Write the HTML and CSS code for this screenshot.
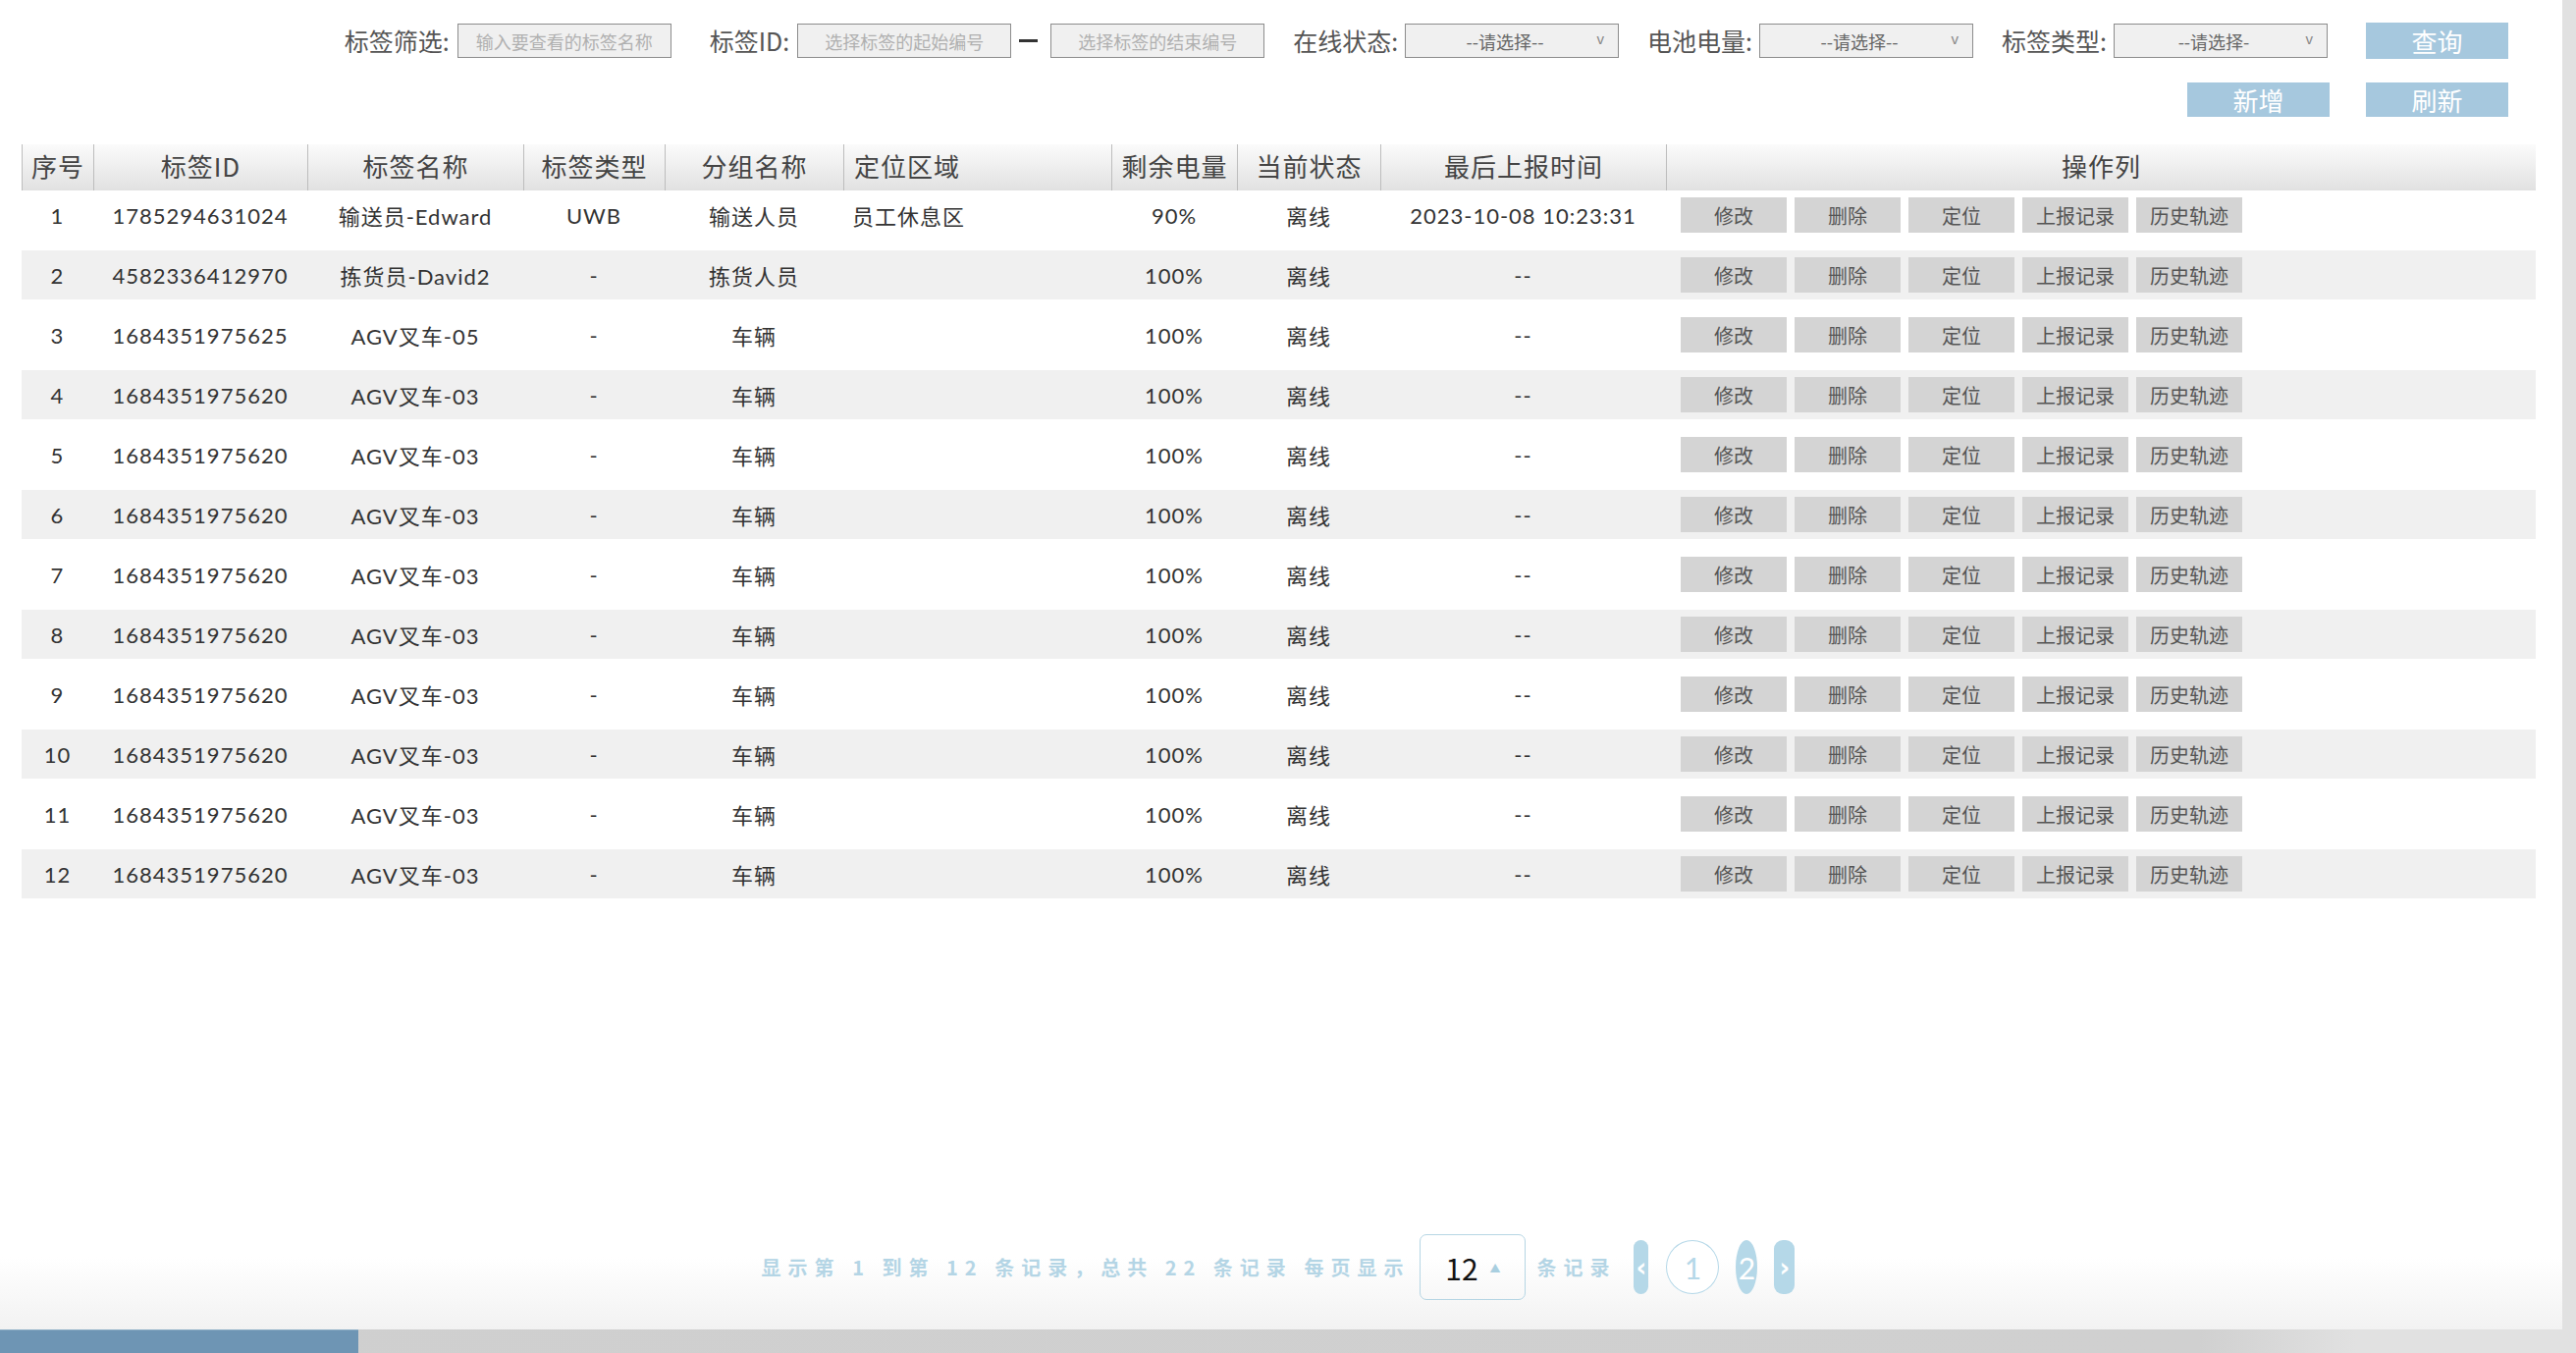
FILE: index.html
```html
<!DOCTYPE html>
<html lang="zh-CN">
<head>
<meta charset="utf-8">
<title>标签管理</title>
<link rel="stylesheet" href="styles.css">
</head>
<body>
<div class="app">
  <div class="page">
    <div class="toolbar">
      <div class="tb-row">
        <span class="lbl">标签筛选:</span>
        <div class="field">输入要查看的标签名称</div>
        <span class="lbl lbl-gap-l">标签ID:</span>
        <div class="field">选择标签的起始编号</div>
        <span class="dash"></span>
        <div class="field">选择标签的结束编号</div>
        <span class="lbl lbl-gap-s">在线状态:</span>
        <div class="field select"><span class="sel-text">--请选择--</span><span class="caret">v</span></div>
        <span class="lbl lbl-gap-s">电池电量:</span>
        <div class="field select"><span class="sel-text">--请选择--</span><span class="caret">v</span></div>
        <span class="lbl lbl-gap-s">标签类型:</span>
        <div class="field select"><span class="sel-text">--请选择-</span><span class="caret">v</span></div>
        <div class="btn btn-query">查询</div>
      </div>
      <div class="tb-row tb-row2">
        <div class="btn btn-small">新增</div>
        <div class="btn btn-small btn-refresh">刷新</div>
      </div>
    </div>

    <div class="table">
      <div class="thead">
        <div class="th">序号</div>
        <div class="th">标签ID</div>
        <div class="th">标签名称</div>
        <div class="th">标签类型</div>
        <div class="th">分组名称</div>
        <div class="th th-left">定位区域</div>
        <div class="th">剩余电量</div>
        <div class="th">当前状态</div>
        <div class="th">最后上报时间</div>
        <div class="th">操作列</div>
      </div>
      <div class="tbody">
        <div class="row"><div class="td">1</div><div class="td">1785294631024</div><div class="td">输送员-Edward</div><div class="td">UWB</div><div class="td">输送人员</div><div class="td td-left">员工休息区</div><div class="td">90%</div><div class="td">离线</div><div class="td">2023-10-08 10:23:31</div><div class="ops"><span class="op">修改</span><span class="op">删除</span><span class="op">定位</span><span class="op">上报记录</span><span class="op">历史轨迹</span></div></div>
        <div class="row"><div class="td">2</div><div class="td">4582336412970</div><div class="td">拣货员-David2</div><div class="td">-</div><div class="td">拣货人员</div><div class="td td-left"></div><div class="td">100%</div><div class="td">离线</div><div class="td">--</div><div class="ops"><span class="op">修改</span><span class="op">删除</span><span class="op">定位</span><span class="op">上报记录</span><span class="op">历史轨迹</span></div></div>
        <div class="row"><div class="td">3</div><div class="td">1684351975625</div><div class="td">AGV叉车-05</div><div class="td">-</div><div class="td">车辆</div><div class="td td-left"></div><div class="td">100%</div><div class="td">离线</div><div class="td">--</div><div class="ops"><span class="op">修改</span><span class="op">删除</span><span class="op">定位</span><span class="op">上报记录</span><span class="op">历史轨迹</span></div></div>
        <div class="row"><div class="td">4</div><div class="td">1684351975620</div><div class="td">AGV叉车-03</div><div class="td">-</div><div class="td">车辆</div><div class="td td-left"></div><div class="td">100%</div><div class="td">离线</div><div class="td">--</div><div class="ops"><span class="op">修改</span><span class="op">删除</span><span class="op">定位</span><span class="op">上报记录</span><span class="op">历史轨迹</span></div></div>
        <div class="row"><div class="td">5</div><div class="td">1684351975620</div><div class="td">AGV叉车-03</div><div class="td">-</div><div class="td">车辆</div><div class="td td-left"></div><div class="td">100%</div><div class="td">离线</div><div class="td">--</div><div class="ops"><span class="op">修改</span><span class="op">删除</span><span class="op">定位</span><span class="op">上报记录</span><span class="op">历史轨迹</span></div></div>
        <div class="row"><div class="td">6</div><div class="td">1684351975620</div><div class="td">AGV叉车-03</div><div class="td">-</div><div class="td">车辆</div><div class="td td-left"></div><div class="td">100%</div><div class="td">离线</div><div class="td">--</div><div class="ops"><span class="op">修改</span><span class="op">删除</span><span class="op">定位</span><span class="op">上报记录</span><span class="op">历史轨迹</span></div></div>
        <div class="row"><div class="td">7</div><div class="td">1684351975620</div><div class="td">AGV叉车-03</div><div class="td">-</div><div class="td">车辆</div><div class="td td-left"></div><div class="td">100%</div><div class="td">离线</div><div class="td">--</div><div class="ops"><span class="op">修改</span><span class="op">删除</span><span class="op">定位</span><span class="op">上报记录</span><span class="op">历史轨迹</span></div></div>
        <div class="row"><div class="td">8</div><div class="td">1684351975620</div><div class="td">AGV叉车-03</div><div class="td">-</div><div class="td">车辆</div><div class="td td-left"></div><div class="td">100%</div><div class="td">离线</div><div class="td">--</div><div class="ops"><span class="op">修改</span><span class="op">删除</span><span class="op">定位</span><span class="op">上报记录</span><span class="op">历史轨迹</span></div></div>
        <div class="row"><div class="td">9</div><div class="td">1684351975620</div><div class="td">AGV叉车-03</div><div class="td">-</div><div class="td">车辆</div><div class="td td-left"></div><div class="td">100%</div><div class="td">离线</div><div class="td">--</div><div class="ops"><span class="op">修改</span><span class="op">删除</span><span class="op">定位</span><span class="op">上报记录</span><span class="op">历史轨迹</span></div></div>
        <div class="row"><div class="td">10</div><div class="td">1684351975620</div><div class="td">AGV叉车-03</div><div class="td">-</div><div class="td">车辆</div><div class="td td-left"></div><div class="td">100%</div><div class="td">离线</div><div class="td">--</div><div class="ops"><span class="op">修改</span><span class="op">删除</span><span class="op">定位</span><span class="op">上报记录</span><span class="op">历史轨迹</span></div></div>
        <div class="row"><div class="td">11</div><div class="td">1684351975620</div><div class="td">AGV叉车-03</div><div class="td">-</div><div class="td">车辆</div><div class="td td-left"></div><div class="td">100%</div><div class="td">离线</div><div class="td">--</div><div class="ops"><span class="op">修改</span><span class="op">删除</span><span class="op">定位</span><span class="op">上报记录</span><span class="op">历史轨迹</span></div></div>
        <div class="row"><div class="td">12</div><div class="td">1684351975620</div><div class="td">AGV叉车-03</div><div class="td">-</div><div class="td">车辆</div><div class="td td-left"></div><div class="td">100%</div><div class="td">离线</div><div class="td">--</div><div class="ops"><span class="op">修改</span><span class="op">删除</span><span class="op">定位</span><span class="op">上报记录</span><span class="op">历史轨迹</span></div></div>
      </div>
    </div>

    <div class="pager">
      <span class="pg-text">显示第 1 到第 12 条记录，总共 22 条记录 每页显示</span>
      <div class="size-box"><span class="size-num">12</span><span class="size-caret">▲</span></div>
      <span class="pg-text pg-unit">条记录</span>
      <span class="pg-btn pg-prev">‹</span>
      <span class="pg-btn pg-one">1</span>
      <span class="pg-btn pg-two">2</span>
      <span class="pg-btn pg-next">›</span>
    </div>
  </div>
  <div class="hscroll"><div class="thumb"></div></div>
</div>
</body>
</html>
```

FILE: styles.css
```css
* { box-sizing: border-box; }

html, body {
  margin: 0;
  padding: 0;
}

body {
  width: 2624px;
  height: 1378px;
  overflow: hidden;
  background: #e1e1e1;
  font-family: "Noto Sans CJK SC", "Noto Sans", sans-serif;
  color: #333;
}

.app {
  display: flex;
  flex-direction: column;
  width: 2624px;
  height: 1378px;
}

.page {
  width: 2610px;
  height: 1354px;
  display: flex;
  flex-direction: column;
  background: linear-gradient(to bottom, #ffffff 0, #ffffff 1280px, #f2f2f2 1354px);
}

/* ---------- toolbar ---------- */
.toolbar {
  display: flex;
  flex-direction: column;
  align-items: flex-end;
  padding: 23px 55px 0 0;
  gap: 24px;
}

.tb-row {
  display: flex;
  align-items: center;
  height: 37px;
}

.tb-row2 {
  height: 35px;
}

.lbl {
  font-size: 25px;
  line-height: 1;
  color: #555;
  margin-right: 8px;
  white-space: nowrap;
}

.lbl-gap-l { margin-left: 39px; }
.lbl-gap-s { margin-left: 29px; margin-right: 7px; }

.field {
  width: 218px;
  height: 35px;
  border: 1px solid #8c8c8c;
  background: #f0f0f0;
  display: flex;
  align-items: center;
  justify-content: center;
  font-size: 18px;
  color: #b0b0b0;
  white-space: nowrap;
}

.select {
  position: relative;
  color: #666;
  font-size: 18px;
}

.sel-text { margin-left: -14px; }

.caret {
  position: absolute;
  right: 14px;
  top: 6px;
  font-size: 15px;
  color: #888;
  font-family: "Liberation Sans", sans-serif;
}

.dash {
  width: 19px;
  height: 3px;
  background: #333;
  margin: 0 13px 0 8px;
}

.btn {
  width: 145px;
  height: 37px;
  background: #a6c8de;
  color: #fff;
  font-size: 26px;
  display: flex;
  align-items: center;
  justify-content: center;
}

.btn-query { margin-left: 39px; }

.btn-small { height: 35px; }
.btn-refresh { margin-left: 37px; }

/* ---------- table ---------- */
.table {
  margin: 28px 27px 0 22px;
  width: 2561px;
}

.thead, .row {
  display: grid;
  grid-template-columns: 73px 218px 220px 144px 182px 273px 128px 146px 291px 1fr;
}

.thead {
  height: 47px;
  background: linear-gradient(to bottom, #fbfbfb, #e1e1e1);
}

.th {
  border-left: 1px solid #bdbdbd;
  display: flex;
  align-items: center;
  justify-content: center;
  font-size: 26px;
  letter-spacing: 1px;
  color: #444;
  white-space: nowrap;
  padding-bottom: 4px;
}

.th-left {
  justify-content: flex-start;
  padding-left: 10px;
}

.tbody {
  display: flex;
  flex-direction: column;
  gap: 11px;
}

.row {
  height: 50px;
  background: #fff;
}

.row:nth-child(even) {
  background: #f0f0f0;
}

.td {
  display: flex;
  align-items: center;
  justify-content: center;
  font-family: "Lato", "Noto Sans CJK SC", sans-serif;
  font-size: 22px;
  letter-spacing: 1px;
  color: #333;
  white-space: nowrap;
}

.td-left {
  justify-content: flex-start;
  padding-left: 9px;
}

.ops {
  display: flex;
  align-items: center;
  gap: 8px;
  padding-left: 15px;
}

.op {
  width: 108px;
  height: 36px;
  background: #d4d4d4;
  color: #555;
  font-size: 20px;
  display: flex;
  align-items: center;
  justify-content: center;
}

/* ---------- pager ---------- */
.pager {
  margin-top: auto;
  margin-bottom: 30px;
  display: flex;
  align-items: center;
  justify-content: center;
  height: 67px;
  padding-right: 6px;
}

.pg-text {
  font-size: 20px;
  font-weight: bold;
  color: #b4d5e5;
  letter-spacing: 7px;
  white-space: pre;
}

.pg-unit {
  margin-left: 11px;
}

.size-box {
  margin-left: 10px;
  width: 108px;
  height: 67px;
  border: 1px solid #b6d6e4;
  border-radius: 7px;
  display: flex;
  align-items: center;
  justify-content: center;
}

.size-num {
  font-size: 30px;
  color: #111;
  font-family: "Noto Sans CJK SC", sans-serif;
}

.size-caret {
  font-size: 11px;
  color: #a9cfe0;
  margin-left: 12px;
}

.pg-btn {
  height: 55px;
  display: flex;
  align-items: center;
  justify-content: center;
  background: #b5d8e8;
  color: #fff;
  font-size: 30px;
  font-family: "Lato", sans-serif;
  overflow: hidden;
}

.pg-prev, .pg-next {
  font-size: 26px;
  font-weight: bold;
  font-family: "DejaVu Sans", sans-serif;
}

.pg-prev {
  width: 15px;
  border-radius: 8px;
  margin-left: 18px;
}

.pg-one {
  width: 54px;
  background: #fff;
  border: 1px solid #b5d8e8;
  border-radius: 50%;
  color: #b5d8e8;
  margin-left: 18px;
}

.pg-two {
  width: 22px;
  border-radius: 50%;
  margin-left: 17px;
}

.pg-next {
  width: 21px;
  border-radius: 9px;
  margin-left: 17px;
}

/* ---------- bottom scrollbar ---------- */
.hscroll {
  height: 24px;
  display: flex;
  background: linear-gradient(to right, #cfcfcf 0, #d0d0d0 2240px, #e1e1e1 2400px);
}

.thumb {
  width: 365px;
  background: #6e95b4;
  border-top: 1px solid #8eaec6;
}
```
